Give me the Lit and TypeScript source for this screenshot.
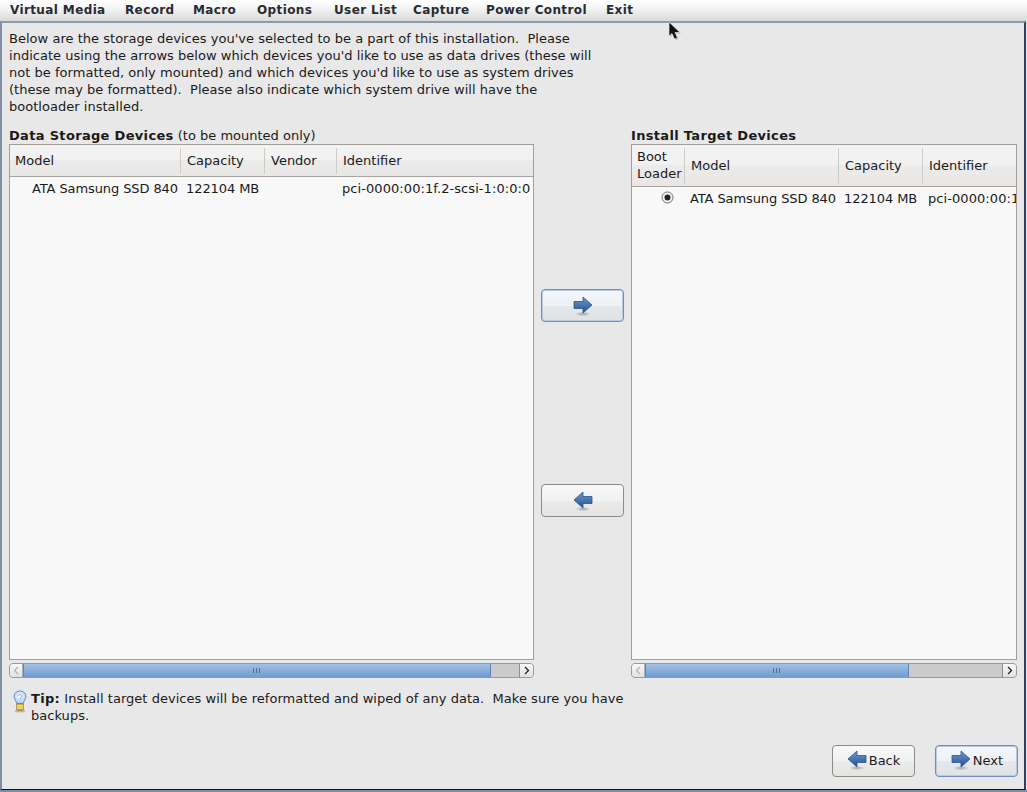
import { LitElement, html, css, svg } from "lit";
import { customElement } from "lit/decorators.js";

const arrow = (dir: "l" | "r") => html`<svg class="arrow" width="20" height="22" viewBox="0 0 20 22">
  <defs>
    <linearGradient id="ag${dir}" x1="0" y1="0" x2="0" y2="1"><stop offset="0" stop-color="#6f9bd0"/><stop offset="1" stop-color="#234f8f"/></linearGradient>
    <radialGradient id="as${dir}"><stop offset="0" stop-color="#000" stop-opacity=".3"/><stop offset="1" stop-color="#000" stop-opacity="0"/></radialGradient>
  </defs>
  <ellipse cx="10" cy="19" rx="8" ry="2.2" fill="url(#as${dir})"/>
  ${dir === "r"
    ? svg`<path d="M1 6.500H10V2L19 10 10 18V13.500H1Z" fill="url(#ag${dir})" stroke="#2a5590" stroke-width=".8"/>`
    : svg`<path d="M19 6.500H10V2L1 10 10 18V13.500H19Z" fill="url(#ag${dir})" stroke="#2a5590" stroke-width=".8"/>`}
</svg>`;

const bulb = html`<svg width="14" height="23" viewBox="0 0 16 26">
  <defs><radialGradient id="bb" cx=".5" cy=".4" r=".6"><stop offset="0" stop-color="#ffffff"/><stop offset="1" stop-color="#a9c6e8"/></radialGradient></defs>
  <ellipse cx="8" cy="24" rx="6" ry="1.600" fill="#000" opacity=".2"/>
  <path d="M8 1C4 1 1.200 3.700 1.200 7.300c0 3.200 2.600 4.700 3 8.200h7.600c.4-3.500 3-5 3-8.200C14.800 3.700 12 1 8 1Z" fill="url(#bb)" stroke="#5b8cc4" stroke-width="1.100"/>
  <path d="M6 6.500a2.200 2.200 0 0 1 4.200 0L8 11" fill="none" stroke="#7ea6d6" stroke-width="1"/>
  <rect x="4" y="15.500" width="8" height="7.500" rx="1.500" fill="#d9b93c" stroke="#8c7420" stroke-width=".9"/>
  <path d="M4 18h8M4 20.500h8" stroke="#fff3b5" stroke-width="1"/>
</svg>`;

@customElement("app-root")
export class AppRoot extends LitElement {
  static styles = css`
    :host { display: block; width: 1027px; height: 792px; position: relative; overflow: hidden; background: #e8e8e8;
      font: 13px/17px "DejaVu Sans", sans-serif; color: #1a1a1a; }
    * { box-sizing: border-box; }
    .menu { height: 21px; display: flex; align-items: center; padding-left: 10px; font-weight: 700; font-size: 12px; letter-spacing: .38px; color: #262c33;
      background: linear-gradient(#ffffff, #f4f4f4 40%, #d9d9d9); }
    .menu span { white-space: nowrap; }
    .win { height: 769px; border-top: 2px solid #8d9aa8; border-left: 2px solid #7b8ea3; border-right: 2px solid #2f4266; margin-right: 1px; border-bottom: 1px solid #111;
      padding: 7px 6px 0 7px; display: flex; flex-direction: column; background: #e8e8e8; }
    .strip { height: 2px; background: #7b8ea3; }
    .intro { white-space: pre; height: 93px; letter-spacing: .025px; }
    .cols { display: grid; grid-template-columns: 525px 97px 386px; height: 555px; }
    .col { display: flex; flex-direction: column; min-width: 0; }
    .h { height: 21px; padding-top: 4px; white-space: pre; flex: none; }
    b { font-weight: 700; letter-spacing: .32px; }
    .tbl { height: 516px; flex: none; border: 1px solid #a39e9a; background: #f8f8f8; overflow: hidden; }
    .tbl .hd { display: flex; background: linear-gradient(#f3f3f3, #f1f1f1 50%, #ebebeb 50%, #e9e7e5); border-bottom: 1px solid #a8a4a0; height: 32px; }
    .tbl.r .hd { height: 42px; }
    .hd > div { display: flex; align-items: center; padding-left: 6px; white-space: nowrap; position: relative; margin: 1px 0 2px; }
    .hd > div:first-child { padding-left: 5px; }
    .hd > div + div::before { content: ""; position: absolute; left: -1px; top: 2px; bottom: 0; width: 1px; background: #cfcbc7; }
    .row { display: flex; height: 22px; align-items: center; white-space: nowrap; background: #f8f8f8; }
    .row > div { padding-left: 5px; overflow: hidden; flex: none; }
    .model { letter-spacing: -.1px; }
    .cap { letter-spacing: -.08px; }
    .ident { letter-spacing: .07px; }
    .radio { display: flex; justify-content: center; padding-left: 17px !important; margin-top: -2px; }
    .sb { margin-top: 3px; height: 15px; display: flex; flex: none; background: #cbcbcb; border: 1px solid #9a9a9a; border-radius: 4px; overflow: hidden; }
    .btn { flex: none; background: linear-gradient(#f8f8f8, #e2e2e2); display: flex; align-items: center; justify-content: center; }
    .btn.left { width: 13px; border-right: 1px solid #b0b0b0; }
    .btn.right { width: 14px; border-left: 1px solid #8f8f8f; }
    .thumb { background: linear-gradient(#a3c1e3, #6f9bd0); border-left: 1px solid #5b86bb; border-right: 1px solid #5b86bb; display: flex; align-items: center; justify-content: center; flex: none; }
    .trough { flex: none; }
    .grip { display: flex; gap: 2px; margin-right: 2px; }
    .grip i { width: 1px; height: 5px; background: #4d6f99; display: block; }
    .mid { display: flex; flex-direction: column; align-items: center; padding-top: 166px; }
    .pb { width: 83px; height: 33px; border: 1px solid #8e8a86; border-radius: 4px; background: linear-gradient(#f8f8f8, #f2f2f2 50%, #ebebeb 52%, #e6e4e2); display: flex; align-items: center; justify-content: center; gap: 2px; color: #1a1a1a; padding: 0; font: inherit; }
    .pb.focus { border: 1px solid #6e8fbd; box-shadow: inset 0 0 0 1px #b9cbe3; background: linear-gradient(#f4f6fb, #eef1f6 50%, #e4e8ea 52%, #dfe3e5); }
    .mid .pb:last-child { margin-top: 162px; }
    .tip { display: flex; height: 34px; margin-top: 12px; padding-left: 4px; gap: 4px; white-space: pre; flex: none; letter-spacing: .03px; }
    .foot { display: flex; justify-content: flex-end; gap: 20px; margin-top: 21px; }
    .foot .pb { height: 32px; padding-bottom: 2px; }
    .foot .focus { padding-left: 1px; }
    .cursor { position: absolute; left: 668px; top: 21px; }
  `;

  private sb(thumb: number, trough: number) {
    return html`<div class="sb">
      <div class="btn left"><svg width="6" height="9" viewBox="0 0 6 9"><path d="M5 1 1.500 4.500 5 8" fill="none" stroke="#b4b4b4" stroke-width="1.300"/></svg></div>
      <div class="thumb" style="width:${thumb}px"><div class="grip"><i></i><i></i><i></i></div></div>
      <div class="trough" style="width:${trough}px"></div>
      <div class="btn right"><svg width="6" height="9" viewBox="0 0 6 9"><path d="M1 1 4.500 4.500 1 8" fill="none" stroke="#222" stroke-width="1.300"/></svg></div>
    </div>`;
  }

  render() {
    const menus: [string, number][] = [["Virtual Media", 115], ["Record", 68], ["Macro", 64], ["Options", 77], ["User List", 79], ["Capture", 73], ["Power Control", 120], ["Exit", 40]];
    return html`
      <div class="menu">${menus.map(([m, w]) => html`<span style="width:${w}px">${m}</span>`)}</div>
      <div class="win">
        <div class="intro">Below are the storage devices you've selected to be a part of this installation.  Please
indicate using the arrows below which devices you'd like to use as data drives (these will
not be formatted, only mounted) and which devices you'd like to use as system drives
(these may be formatted).  Please also indicate which system drive will have the
bootloader installed.</div>
        <div class="cols">
          <div class="col">
            <div class="h"><b>Data Storage Devices</b> (to be mounted only)</div>
            <div class="tbl">
              <div class="hd">
                <div style="width:171px">Model</div><div style="width:84px">Capacity</div><div style="width:72px">Vendor</div><div style="width:196px">Identifier</div>
              </div>
              <div class="row">
                <div class="model" style="width:171px;padding-left:22px">ATA Samsung SSD 840</div><div class="cap" style="width:84px">122104 MB</div><div style="width:72px"></div><div class="ident" style="width:196px">pci-0000:00:1f.2-scsi-1:0:0:0</div>
              </div>
            </div>
            ${this.sb(468, 28)}
          </div>
          <div class="mid">
            <button class="pb focus">${arrow("r")}</button>
            <button class="pb">${arrow("l")}</button>
          </div>
          <div class="col">
            <div class="h"><b>Install Target Devices</b></div>
            <div class="tbl r">
              <div class="hd">
                <div style="width:53px">Boot<br>Loader</div><div style="width:154px">Model</div><div style="width:84px">Capacity</div><div style="width:93px">Identifier</div>
              </div>
              <div class="row">
                <div class="radio" style="width:53px"><svg width="13" height="13" viewBox="0 0 13 13"><circle cx="6.500" cy="6.500" r="5.500" fill="#f4f4f4" stroke="#6e6e6e"/><circle cx="6.500" cy="6.500" r="3" fill="#222"/></svg></div>
                <div class="model" style="width:154px">ATA Samsung SSD 840</div><div class="cap" style="width:84px">122104 MB</div><div class="ident" style="width:93px">pci-0000:00:1f.2-scsi-1:0:0:0</div>
              </div>
            </div>
            ${this.sb(264, 93)}
          </div>
        </div>
        <div class="tip">${bulb}<div><b>Tip:</b> Install target devices will be reformatted and wiped of any data.  Make sure you have
backups.</div></div>
        <div class="foot">
          <button class="pb">${arrow("l")}Back</button>
          <button class="pb focus">${arrow("r")}Next</button>
        </div>
      </div>
      <div class="strip"></div>
      <svg class="cursor" width="14" height="20" viewBox="0 0 14 20"><path d="M2 2V16L5 13.500 7.500 19 10.500 18 8 12.500H13Z" fill="#999" opacity=".6"/><path d="M1 1V15L4 12.500 6.500 18 9.500 17 7 11.500H12Z" fill="#111" stroke="#e4e4e4" stroke-width=".7"/></svg>
    `;
  }
}
